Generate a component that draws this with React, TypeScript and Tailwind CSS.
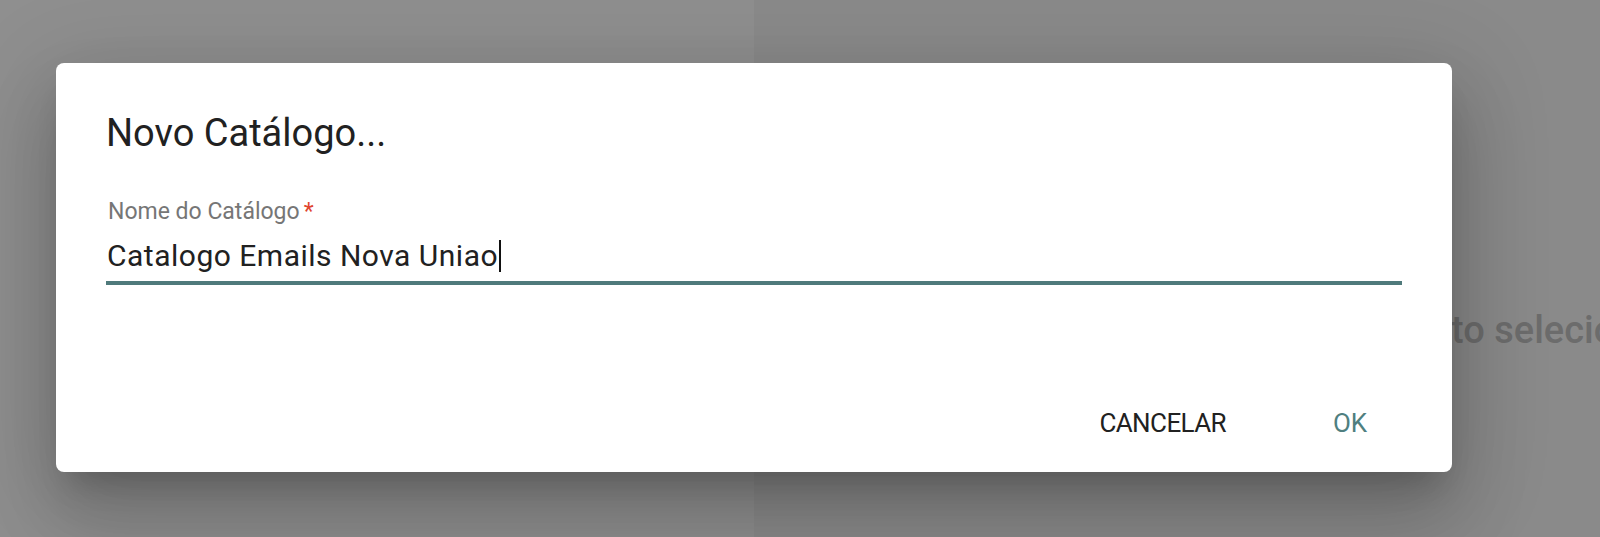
import { useState } from "react";

const FONT = "font-['Roboto','Noto_Sans',sans-serif]";

export default function App() {
  const [name] = useState("Catalogo Emails Nova Uniao");

  return (
    <div className={`relative flex h-[537px] w-full overflow-hidden ${FONT}`}>
      {/* fundo: lista + painel de detalhe sob o overlay */}
      <div className="w-[754px] shrink-0 bg-[#8f8f8f]" />
      <div className="min-w-0 flex-1 bg-[#8a8a8a] pl-[458px] pt-[304px]">
        <p className="whitespace-nowrap text-[38px] font-medium leading-[52px] text-[#6c6c6c]">
          Nenhum projeto selecionado
        </p>
      </div>

      {/* diálogo */}
      <div className="absolute left-[56px] top-[63px] flex h-[409px] w-[1396px] flex-col rounded-[8px] bg-white px-[50px] pt-[46px] shadow-[0_22px_30px_-14px_rgba(0,0,0,0.2),0_48px_76px_6px_rgba(0,0,0,0.14),0_18px_92px_16px_rgba(0,0,0,0.12)]">
        <h2 className="text-[38px] font-normal leading-[48px] text-[#212121]">Novo Catálogo...</h2>

        <div className="mt-[39px]">
          <span className="block pl-[2px] text-[23px] leading-[32px] text-[#767676]">
            Nome do Catálogo<span className="ml-[4px] text-[#e0452e]">*</span>
          </span>
          <div className="mt-[8px] flex items-center">
            <span className="whitespace-pre pl-[1px] text-[30px] leading-[40px] tracking-[0.5px] text-[#212121]">
              {name}
            </span>
            <span className="ml-[1px] h-[32px] w-[2px] bg-[#111]" />
          </div>
          <div className="mt-[5px] h-[4px] w-full bg-[#4f7a7b]" />
        </div>

        <div className="mt-auto mb-[13px] -mr-[12px] flex justify-end gap-[28px]">
          <button
            type="button"
            className="h-[72px] min-w-[128px] px-[32px] text-[26px] uppercase tracking-[-0.6px] text-[#212121]"
          >
            Cancelar
          </button>
          <button
            type="button"
            className="h-[72px] min-w-[128px] px-[32px] text-[26px] uppercase text-[#4f7f80]"
          >
            OK
          </button>
        </div>
      </div>
    </div>
  );
}
